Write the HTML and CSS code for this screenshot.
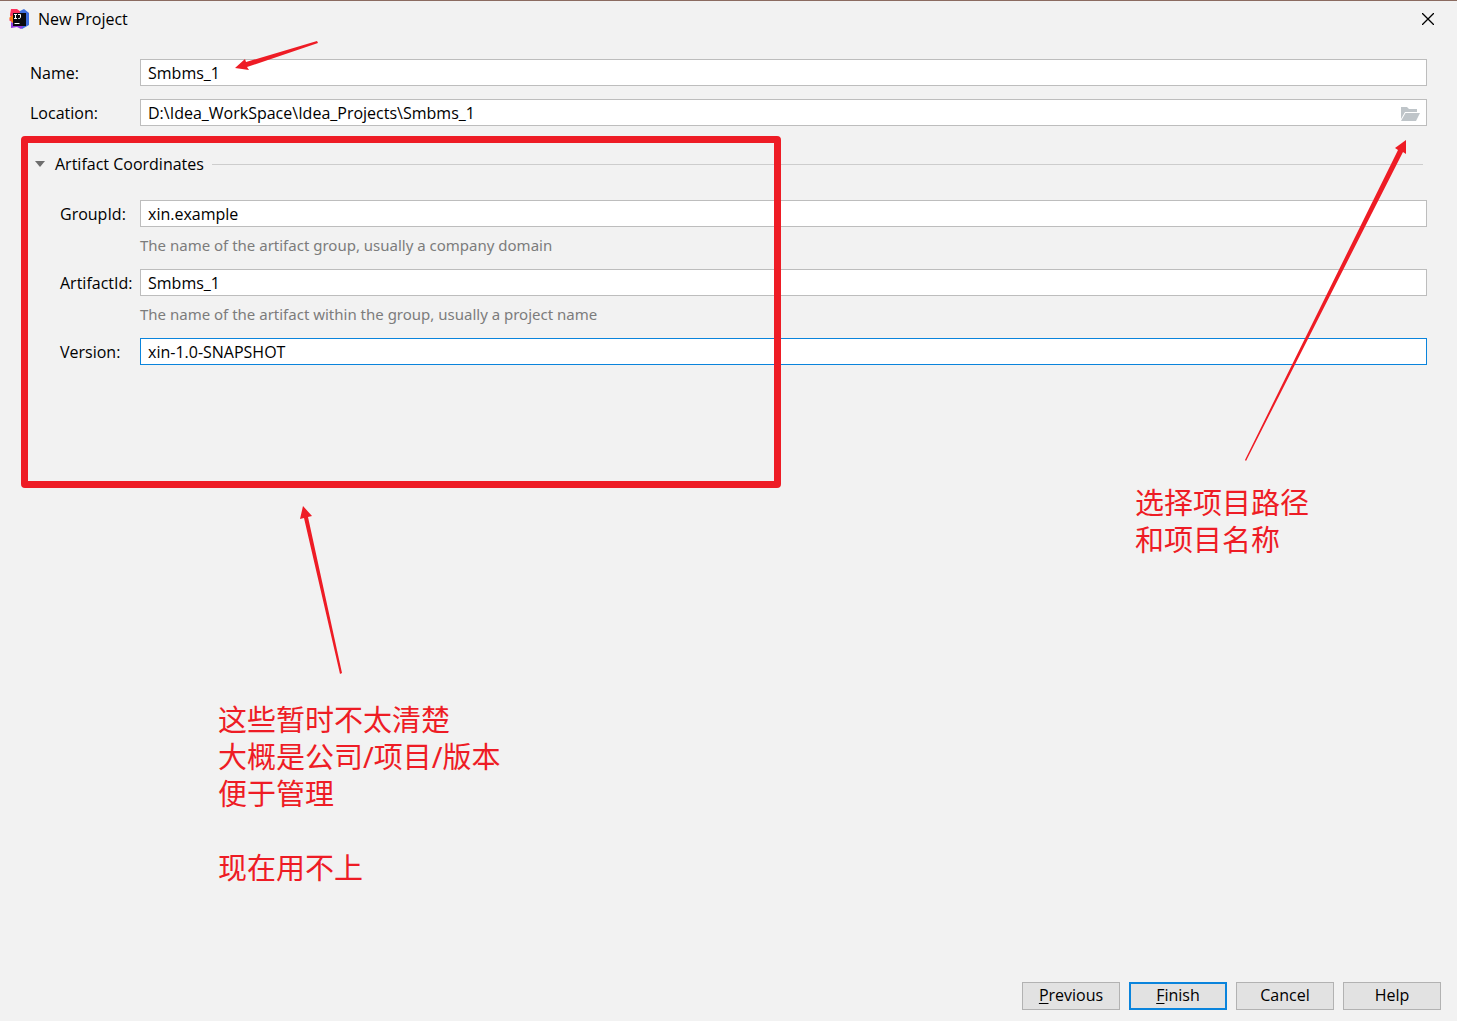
FILE: index.html
```html
<!DOCTYPE html>
<html lang="en">
<head>
  <meta charset="UTF-8">
  <meta name="viewport" content="width=device-width, initial-scale=1">
  <title>New Project</title>
  <link rel="stylesheet" href="styles.css">
</head>
<body>
  <header class="titlebar">
    <svg class="logo" width="20" height="20" viewBox="0 0 20 20">
      <path d="M2 0h6l4 3v6L4 14 0 11l2-2-1-3z" fill="#fe315d"></path>
      <path d="M0 9l4-3v8z" fill="#f97a12"></path>
      <path d="M11 2l4-2 5 4v12l-7 4-4-3z" fill="#3f6fe0"></path>
      <path d="M2 13l5 3h8l-3 4-4-2-6 1z" fill="#9139e0"></path>
      <rect x="4" y="4" width="13" height="13" fill="#0b0b10"></rect>
      <path d="M5 5.500h3M6.500 5.500v4M5 9.500h3M9 5.500h2.500v3q0 1-2 1H9M5.500 14.500h5" stroke="#fff" stroke-width="1" fill="none"></path>
    </svg>
    <h1>New Project</h1>
    <button class="close" type="button" aria-label="Close">
      <svg width="12" height="12" viewBox="0 0 12 12">
        <path d="M0 0L12 12M12 0L0 12" stroke="#000" stroke-width="1.300"></path>
      </svg>
    </button>
  </header>
  <form class="wizard">
    <main>
      <div class="row">
        <label for="name">Name:</label>
        <input id="name" type="text" value="Smbms_1">
      </div>
      <div class="row">
        <label for="location">Location:</label>
        <div class="path-field">
          <input id="location" type="text" value="D:\Idea_WorkSpace\Idea_Projects\Smbms_1">
          <button class="browse" type="button" aria-label="Browse">
            <svg width="20" height="14" viewBox="0 0 20 14">
              <path d="M1 0h6l2 2h8v3H5L1 12z" fill="#bfc5c9"></path>
              <path d="M5.500 6H20l-4 8H1z" fill="#bfc5c9"></path>
            </svg>
          </button>
        </div>
      </div>
      <section class="artifact">
        <h2>
          <svg width="10" height="6" viewBox="0 0 10 6"><path d="M0 0h10L5 6z" fill="#6e6e6e"></path></svg>
          <span>Artifact Coordinates</span>
        </h2>
        <div class="row">
          <label for="groupId">GroupId:</label>
          <input id="groupId" type="text" value="xin.example">
          <p class="hint">The name of the artifact group, usually a company domain</p>
        </div>
        <div class="row">
          <label for="artifactId">ArtifactId:</label>
          <input id="artifactId" type="text" value="Smbms_1">
          <p class="hint">The name of the artifact within the group, usually a project name</p>
        </div>
        <div class="row">
          <label for="version">Version:</label>
          <input id="version" class="focused" type="text" value="xin-1.0-SNAPSHOT">
        </div>
      </section>
    </main>
    <footer>
      <button type="button"><u>P</u>revious</button>
      <button class="default" type="button"><u>F</u>inish</button>
      <button type="button">Cancel</button>
      <button type="button">Help</button>
    </footer>
  </form>

  <!-- notes drawn over the dialog -->
  <div class="mark-box"></div>
  <svg class="arrow arrow-name" width="84" height="30" viewBox="0 0 84 30">
    <path d="M0 27L10 18 11 21 82 0 83 2 12 26 14 29z"></path>
  </svg>
  <svg class="arrow arrow-artifact" width="42" height="168" viewBox="0 0 42 168">
    <path d="M3 0L12 10 8 11 42 167 40 168 4 12 0 13z"></path>
  </svg>
  <svg class="arrow arrow-path" width="164" height="322" viewBox="0 0 164 322">
    <path d="M162 0L162 14 159 12 2 321 1 320 154 10 151 8z"></path>
  </svg>
  <p class="note note-artifact" lang="zh-CN">这些暂时不太清楚<br>大概是公司/项目/版本<br>便于管理<br><br>现在用不上</p>
  <p class="note note-path" lang="zh-CN">选择项目路径<br>和项目名称</p>
</body>
</html>
```
FILE: styles.css
```css
* {
  box-sizing: border-box;
}
body {
  margin: 0;
  min-height: 100vh;
  position: relative;
  display: flex;
  flex-direction: column;
  background: #f2f2f2;
  border-top: 1px solid #8b6b61;
  color: #000;
  font: 16px/20px "Open Sans", "Noto Sans", sans-serif;
}
h1, h2, p {
  margin: 0;
  font-size: 16px;
  font-weight: 400;
}
button, input {
  font: inherit;
  color: inherit;
}
.titlebar {
  display: flex;
  align-items: center;
  height: 36px;
  padding: 0 23px 0 9px;
}
.titlebar h1 {
  flex: 1;
  margin-left: 9px;
}
.close, .browse {
  display: flex;
  padding: 0;
  border: none;
  background: none;
}
.wizard {
  flex: 1;
  display: flex;
  flex-direction: column;
}
main {
  flex: 1;
  padding: 22px 30px 0;
}
.row {
  display: grid;
  grid-template-columns: 110px 1fr;
  align-items: center;
  margin-bottom: 13px;
}
input {
  display: block;
  width: 100%;
  height: 27px;
  padding: 0 7px;
  border: 1px solid #bdbdbd;
  border-radius: 0;
  background: #fff;
  outline: none;
}
input.focused {
  border-color: #0a84dc;
}
.path-field {
  position: relative;
}
.browse {
  position: absolute;
  right: 7px;
  top: 8px;
}
.artifact {
  padding: 15px 0 0 30px;
}
.artifact h2 {
  display: flex;
  align-items: center;
  margin: 0 4px 26px -25px;
}
.artifact h2 span {
  margin: 0 8px 0 10px;
}
.artifact h2::after {
  content: "";
  flex: 1;
  height: 1px;
  background: #cdcdcd;
}
.artifact .row {
  grid-template-columns: 80px 1fr;
  margin-bottom: 14px;
}
.hint {
  grid-column: 2;
  margin-top: 8px;
  color: #7c7c7c;
  font-family: "Noto Sans", sans-serif;
  font-size: 15px;
}
footer {
  display: flex;
  justify-content: flex-end;
  gap: 9px;
  padding: 0 16px 11px;
}
footer button {
  width: 98px;
  height: 28px;
  padding: 0 0 2px;
  border: 1px solid #b2b2b2;
  background: #e2e2e2;
}
footer .default {
  border: 2px solid #0a84dc;
}
u {
  text-underline-offset: 2px;
}
.mark-box {
  position: absolute;
  left: 21px;
  top: 135px;
  width: 760px;
  height: 352px;
  border: 7px solid #ee1c25;
  border-radius: 4px;
  pointer-events: none;
}
.arrow {
  position: absolute;
  fill: #ee1c25;
  pointer-events: none;
}
.arrow-name {
  left: 235px;
  top: 40px;
}
.arrow-artifact {
  left: 300px;
  top: 505px;
}
.arrow-path {
  right: 49px;
  top: 139px;
}
.note {
  position: absolute;
  color: #ee1c25;
  font: 29px/37px "Noto Sans", "Noto Sans CJK SC", sans-serif;
}
.note-artifact {
  left: 218px;
  top: 700px;
}
.note-path {
  right: 148px;
  top: 483px;
}
```
